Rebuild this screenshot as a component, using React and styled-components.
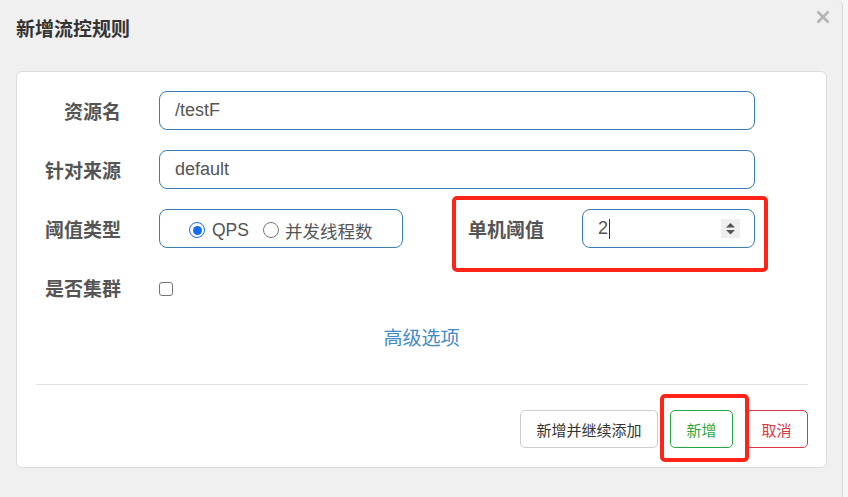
import React from 'react';
import styled, { createGlobalStyle } from 'styled-components';

const GlobalStyle = createGlobalStyle`
    html, body {
        margin: 0;
        padding: 0;
        background: #f6f6f6;
        font-family: "Liberation Sans", "Noto Sans CJK SC", sans-serif;
    }
    * { box-sizing: border-box; }
`

const Dialog = styled.div`
    width: 843px;
    height: 497px;
    background: #f0f0f0;
    border-right: 1px solid #d6d6d6;
    border-top-right-radius: 6px;
    display: flex;
    flex-direction: column;
`
const Header = styled.div`
    height: 61px;
    display: flex;
    align-items: flex-start;
    justify-content: space-between;
    padding: 10px 12px 0 16px;
`
const Title = styled.h4`
    margin: 7px 0 0 0;
    font-size: 19px;
    line-height: 26px;
    font-weight: 700;
    color: #333;
`
const Close = styled.button`
    border: 0;
    padding: 0;
    background: none;
    width: 14px;
    height: 14px;
    display: flex;
    cursor: pointer;
`
const Body = styled.div`
    padding: 10px 15px 10px 16px;
`
const Card = styled.div`
    background: #fff;
    border: 1px solid #dcdcdc;
    border-radius: 6px;
    padding: 19px 0 19px 0;
`
const Form = styled.div`
    display: flex;
    flex-direction: column;
    gap: 20px;
`
const Row = styled.div`
    display: flex;
    align-items: center;
    height: 39px;
`
const Label = styled.label`
    width: ${p => p.$width}px;
    padding-right: 38px;
    text-align: right;
    font-size: 19px;
    font-weight: 700;
    color: #555;
    white-space: nowrap;
`
const TextInput = styled.input`
    width: ${p => p.$width}px;
    height: 39px;
    border: 1px solid #3a7bb8;
    border-radius: 8px;
    padding: 0 15px;
    font-family: inherit;
    font-size: 18px;
    color: #555;
    outline: none;
`
const RadioGroup = styled.div`
    width: 244px;
    height: 39px;
    border: 1px solid #3a7bb8;
    border-radius: 8px;
    display: flex;
    align-items: center;
    padding: 3px 0 0 29px;
    font-size: 17.5px;
    color: #555;
`
const RadioOption = styled.span`
    display: flex;
    align-items: center;
    gap: ${p => p.$last ? 6 : 7}px;
    margin-right: ${p => p.$last ? 0 : 14}px;
`
const RadioDot = styled.span`
    width: 16px;
    height: 16px;
    border-radius: 50%;
    border: 1.5px solid ${p => p.$checked ? '#0f6ff0' : '#777'};
    display: flex;
    align-items: center;
    justify-content: center;
    &::after {
        content: '';
        width: 9px;
        height: 9px;
        border-radius: 50%;
        background: ${p => p.$checked ? '#0f6ff0' : 'transparent'};
    }
`
const Pair = styled.div`
    position: relative;
    display: flex;
    align-items: center;
`
const NumberBox = styled.div`
    width: 173px;
    height: 39px;
    border: 1px solid #3a7bb8;
    border-radius: 8px;
    display: flex;
    align-items: center;
    padding: 0 14px 0 15px;
    font-size: 18px;
    color: #555;
`
const Caret = styled.span`
    width: 1px;
    height: 20px;
    background: #333;
    margin-left: 1px;
`
const Spinner = styled.span`
    margin-left: auto;
    width: 19px;
    height: 19px;
    background: #efefef;
    display: flex;
`
const Checkbox = styled.span`
    width: 14px;
    height: 14px;
    border: 1px solid #767676;
    border-radius: 3px;
    margin-top: 2px;
`
const Advanced = styled.a`
    display: block;
    margin-top: 19px;
    text-align: center;
    font-size: 19px;
    line-height: 26px;
    color: #428bca;
    text-decoration: none;
    cursor: pointer;
`
const Footer = styled.div`
    margin: 32px 18px 0 19px;
    border-top: 1px solid #e3e3e3;
    padding-top: 25px;
    display: flex;
    justify-content: flex-end;
    gap: 12px;
`
const Button = styled.button`
    position: relative;
    height: 38px;
    padding: 0 15.5px;
    background: #fff;
    border: 1px solid ${p => p.$color};
    border-radius: 5px;
    color: ${p => p.$text || p.$color};
    font-family: inherit;
    font-size: 15px;
    cursor: pointer;
`
const Highlight = styled.span`
    position: absolute;
    left: ${p => p.$left}px;
    top: ${p => p.$top}px;
    width: ${p => p.$w}px;
    height: ${p => p.$h}px;
    border: 4px solid #ff2418;
    border-radius: 5px;
    pointer-events: none;
    z-index: 2;
`

const CloseIcon = () => (
    <svg width="14" height="14" viewBox="0 0 14 14">
        <path d="M1.5 1.5 L12.5 12.5 M12.5 1.5 L1.5 12.5" stroke="#b4b4b4" strokeWidth="2.6" />
    </svg>
)

const SpinIcon = () => (
    <svg width="19" height="19" viewBox="0 0 19 19">
        <polygon points="5,8.5 9.5,4 14,8.5" fill="#555" />
        <polygon points="5,11 9.5,15.5 14,11" fill="#555" />
    </svg>
)

const App = () => {
    return (
        <>
            <GlobalStyle />
            <Dialog>
                <Header>
                    <Title>新增流控规则</Title>
                    <Close aria-label="close"><CloseIcon /></Close>
                </Header>
                <Body>
                    <Card>
                        <Form>
                            <Row>
                                <Label $width={142}>资源名</Label>
                                <TextInput $width={596} value="/testF" readOnly />
                            </Row>
                            <Row>
                                <Label $width={142}>针对来源</Label>
                                <TextInput $width={596} value="default" readOnly />
                            </Row>
                            <Row>
                                <Label $width={142}>阈值类型</Label>
                                <RadioGroup>
                                    <RadioOption><RadioDot $checked />QPS</RadioOption>
                                    <RadioOption $last><RadioDot />并发线程数</RadioOption>
                                </RadioGroup>
                                <Pair>
                                    <Label $width={179}>单机阈值</Label>
                                    <NumberBox>
                                        2<Caret />
                                        <Spinner><SpinIcon /></Spinner>
                                    </NumberBox>
                                    <Highlight $left={49} $top={-13} $w={316} $h={76} />
                                </Pair>
                            </Row>
                            <Row>
                                <Label $width={142}>是否集群</Label>
                                <Checkbox />
                            </Row>
                        </Form>
                        <Advanced>高级选项</Advanced>
                        <Footer>
                            <Button $color="#cccccc" $text="#333">新增并继续添加</Button>
                            <Pair>
                                <Button $color="#28a745">新增</Button>
                                <Highlight $left={-10} $top={-16} $w={89} $h={68} />
                            </Pair>
                            <Button $color="#dc3545">取消</Button>
                        </Footer>
                    </Card>
                </Body>
            </Dialog>
        </>
    );
}

export default App;
